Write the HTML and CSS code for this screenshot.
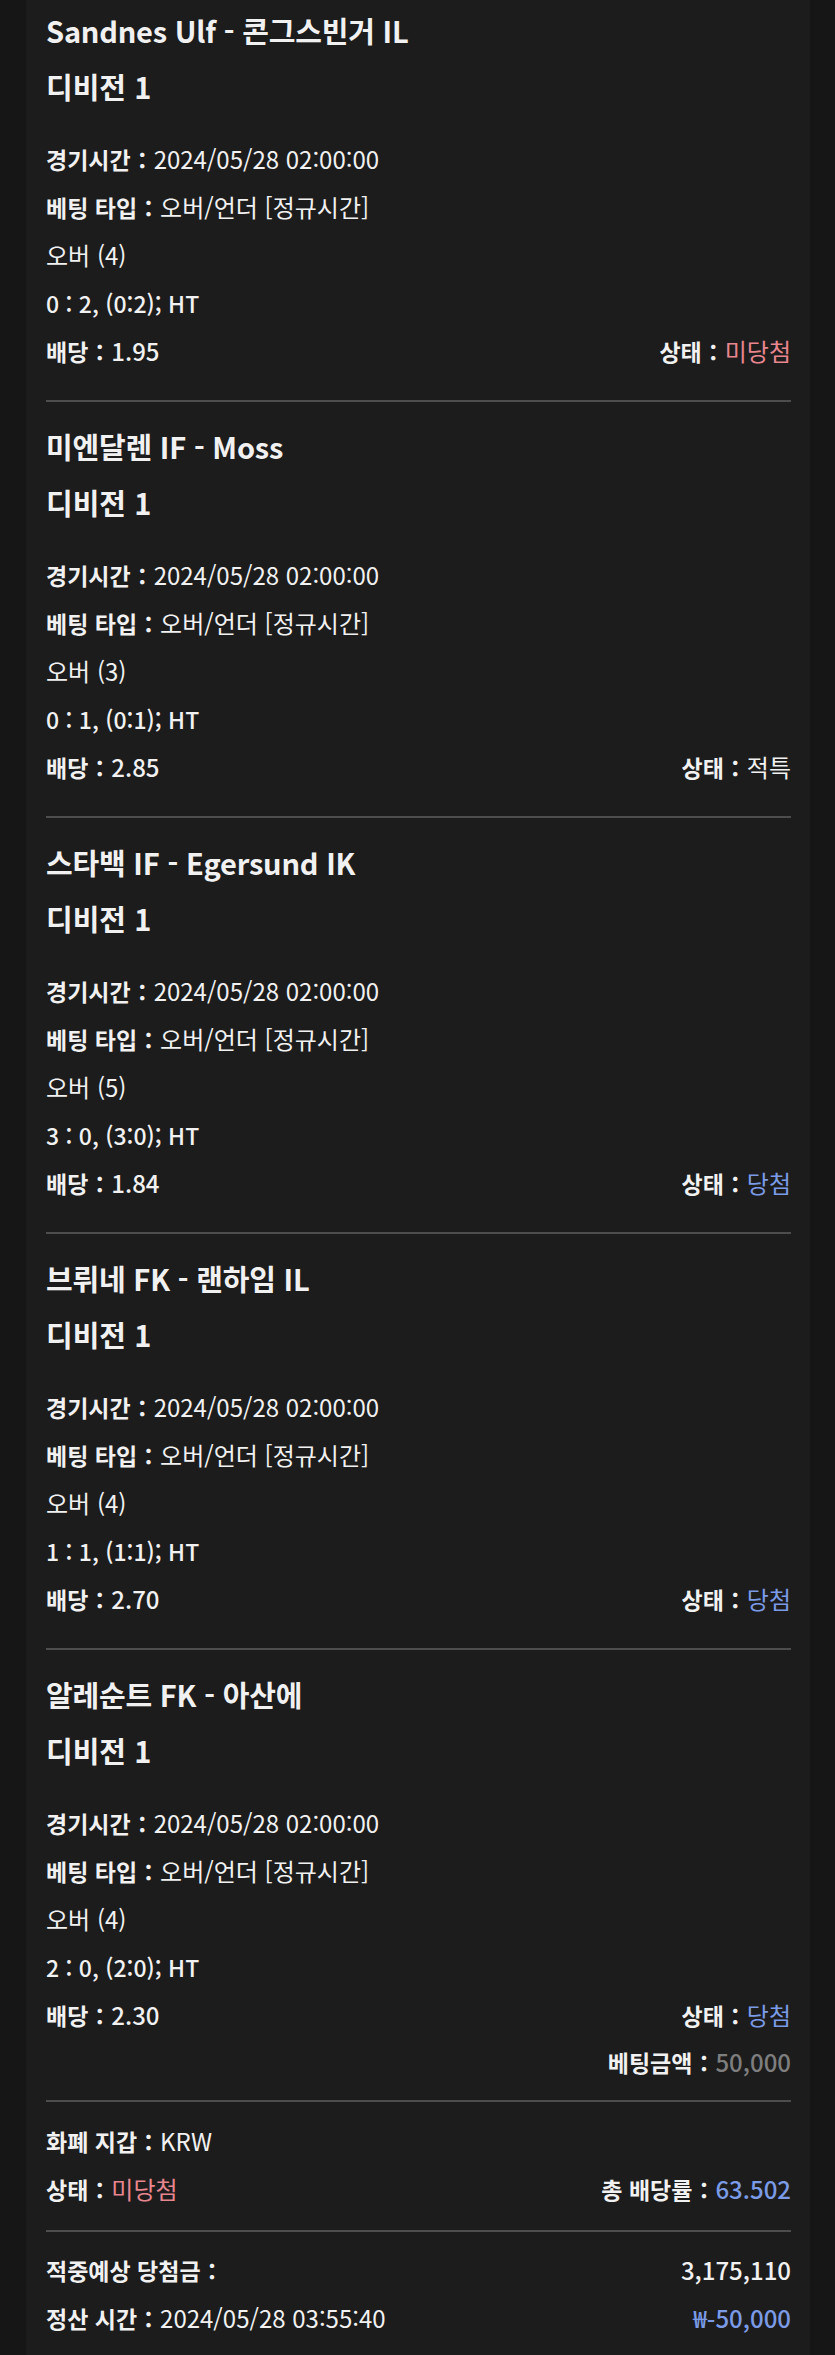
FILE: index.html
```html
<!DOCTYPE html>
<html lang="ko">
    <head>
        <meta charset="UTF-8">
        <meta name="viewport" content="width=device-width, initial-scale=1.0">
        <title>베팅 내역</title>
        <link rel="stylesheet" href="styles.css">
    </head>
    <body>
        <div class="slip">
            <div class="games">
                <div class="game">
                    <div class="game-title">Sandnes Ulf - 콘그스빈거 IL</div>
                    <div class="game-league">디비전 1</div>
                    <div class="details">
                        <div class="row"><span class="label">경기시간：</span>2024/05/28 02:00:00</div>
                        <div class="row"><span class="label">베팅 타입：</span>오버/언더 [정규시간]</div>
                        <div class="row">오버 (4)</div>
                        <div class="row score">0 : 2, (0:2); HT</div>
                        <div class="row split">
                            <div><span class="label">배당：</span><span class="num">1.95</span></div>
                            <div><span class="label">상태：</span><span class="lose">미당첨</span></div>
                        </div>
                    </div>
                </div>
                <div class="game">
                    <div class="game-title">미엔달렌 IF - Moss</div>
                    <div class="game-league">디비전 1</div>
                    <div class="details">
                        <div class="row"><span class="label">경기시간：</span>2024/05/28 02:00:00</div>
                        <div class="row"><span class="label">베팅 타입：</span>오버/언더 [정규시간]</div>
                        <div class="row">오버 (3)</div>
                        <div class="row score">0 : 1, (0:1); HT</div>
                        <div class="row split">
                            <div><span class="label">배당：</span><span class="num">2.85</span></div>
                            <div><span class="label">상태：</span>적특</div>
                        </div>
                    </div>
                </div>
                <div class="game">
                    <div class="game-title">스타백 IF - Egersund IK</div>
                    <div class="game-league">디비전 1</div>
                    <div class="details">
                        <div class="row"><span class="label">경기시간：</span>2024/05/28 02:00:00</div>
                        <div class="row"><span class="label">베팅 타입：</span>오버/언더 [정규시간]</div>
                        <div class="row">오버 (5)</div>
                        <div class="row score">3 : 0, (3:0); HT</div>
                        <div class="row split">
                            <div><span class="label">배당：</span><span class="num">1.84</span></div>
                            <div><span class="label">상태：</span><span class="win">당첨</span></div>
                        </div>
                    </div>
                </div>
                <div class="game">
                    <div class="game-title">브뤼네 FK - 랜하임 IL</div>
                    <div class="game-league">디비전 1</div>
                    <div class="details">
                        <div class="row"><span class="label">경기시간：</span>2024/05/28 02:00:00</div>
                        <div class="row"><span class="label">베팅 타입：</span>오버/언더 [정규시간]</div>
                        <div class="row">오버 (4)</div>
                        <div class="row score">1 : 1, (1:1); HT</div>
                        <div class="row split">
                            <div><span class="label">배당：</span><span class="num">2.70</span></div>
                            <div><span class="label">상태：</span><span class="win">당첨</span></div>
                        </div>
                    </div>
                </div>
                <div class="game game-last">
                    <div class="game-title">알레순트 FK - 아산에</div>
                    <div class="game-league">디비전 1</div>
                    <div class="details">
                        <div class="row"><span class="label">경기시간：</span>2024/05/28 02:00:00</div>
                        <div class="row"><span class="label">베팅 타입：</span>오버/언더 [정규시간]</div>
                        <div class="row">오버 (4)</div>
                        <div class="row score">2 : 0, (2:0); HT</div>
                        <div class="row split">
                            <div><span class="label">배당：</span><span class="num">2.30</span></div>
                            <div><span class="label">상태：</span><span class="win">당첨</span></div>
                        </div>
                        <div class="row stake"><span class="label">베팅금액：</span><span class="num muted">50,000</span></div>
                    </div>
                </div>
            </div>
            <div class="summary">
                <div class="row"><span class="label">화폐 지갑：</span>KRW</div>
                <div class="row split">
                    <div><span class="label">상태：</span><span class="lose">미당첨</span></div>
                    <div><span class="label">총 배당률：</span><span class="num win">63.502</span></div>
                </div>
            </div>
            <div class="summary summary-last">
                <div class="row split">
                    <div><span class="label">적중예상 당첨금：</span></div>
                    <div class="num">3,175,110</div>
                </div>
                <div class="row split">
                    <div><span class="label">정산 시간：</span>2024/05/28 03:55:40</div>
                    <div class="num win">₩-50,000</div>
                </div>
            </div>
        </div>
    </body>
</html>
```

FILE: styles.css
```css
*{
    margin: 0;
    padding: 0;
    box-sizing: border-box;
}
body{
    background-color: #161616;
    color: #f1f1f1;
    font-family: "Noto Sans CJK KR", "Noto Sans", sans-serif;
    font-variant-numeric: tabular-nums;
}
.slip{
    min-height: 100vh;
    margin: 0 25px 0 26px;
    padding: 0 19px 13px 20px;
    background-color: #1c1c1c;
}
.games{
    margin-top: -14px;
}
.game{
    padding: 16px 0 25px;
    border-bottom: 2px solid #4d4d4d;
}
.game-last{
    padding-bottom: 15px;
}
.game-title,
.game-league{
    font-size: 29px;
    font-weight: 700;
    line-height: 56px;
}
.game-title{
    letter-spacing: -0.2px;
}
.details{
    margin-top: 21px;
}
.row{
    font-size: 24px;
    line-height: 48px;
    white-space: nowrap;
}
.label{
    font-size: 23px;
    font-weight: 700;
}
.num,
.score{
    font-weight: 500;
}
.score{
    font-size: 23px;
}
.split{
    display: flex;
    justify-content: space-between;
}
.stake{
    line-height: 46px;
    text-align: right;
}
.summary{
    padding: 15px 0 17px;
    border-bottom: 2px solid #4d4d4d;
}
.summary-last{
    padding: 14px 0 0;
    border-bottom: 0;
}
.lose{
    color: #e8868f;
}
.win{
    color: #7b9be6;
}
.muted{
    color: #7e7e7e;
}
```
